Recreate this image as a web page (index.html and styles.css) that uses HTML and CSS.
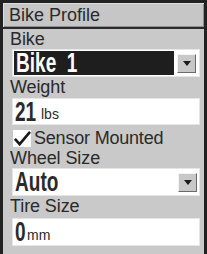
FILE: index.html
```html
<!DOCTYPE html>
<html>
<head>
<meta charset="utf-8">
<link rel="stylesheet" href="styles.css">
</head>
<body>
<div class="screen">
  <div class="title">Bike Profile</div>
  <div class="content">
    <div class="label">Bike</div>
    <div class="select select-dark">
      <span class="val-wrap"><span class="val">Bike&nbsp;&nbsp;1</span></span>
      <span class="btn"><svg width="8" height="5" viewBox="0 0 8 5"><path d="M0 0H8L4 5Z" fill="#1a1a1a"/></svg></span>
    </div>
    <div class="label">Weight</div>
    <div class="field"><span class="val-wrap w-21"><span class="val">21</span></span><span class="unit">lbs</span></div>
    <div class="check">
      <span class="box"><svg width="19" height="17" viewBox="0 0 19 17"><path d="M2 9L7 14.5L18 1.5" fill="none" stroke="#1a1a1a" stroke-width="2.8"/></svg></span>
      <span class="check-text">Sensor Mounted</span>
    </div>
    <div class="label">Wheel Size</div>
    <div class="select">
      <span class="val-wrap"><span class="val">Auto</span></span>
      <span class="btn"><svg width="8" height="5" viewBox="0 0 8 5"><path d="M0 0H8L4 5Z" fill="#1a1a1a"/></svg></span>
    </div>
    <div class="label">Tire Size</div>
    <div class="field field-last"><span class="val-wrap w-0"><span class="val">0</span></span><span class="unit">mm</span></div>
  </div>
</div>
</body>
</html>
```
FILE: styles.css
```css
html, body {
  margin: 0;
  padding: 0;
  background: #222;
}
.screen {
  width: 207px;
  height: 254px;
  box-sizing: border-box;
  border: 3px solid #222;
  border-bottom: 0;
  background: #c9c9c9;
  font-family: "Liberation Sans", Arial, sans-serif;
  color: #2a2a2a;
  overflow: hidden;
}
.title {
  height: 24px;
  box-sizing: content-box;
  border-bottom: 2px solid #2a2a2a;
  box-shadow: inset 1px 1px 0 #dedede, inset -1px -1px 0 #8e8e8e;
  background: #c6c6c6;
  font-size: 18px;
  line-height: 24px;
  padding-left: 6px;
}
.content {
  padding: 0 4px 0 7px;
  display: flex;
  flex-direction: column;
}
.label {
  font-size: 18px;
  line-height: 20px;
  height: 20px;
  letter-spacing: -0.1px;
}
.select, .field {
  margin-left: 2px;
  height: 28px;
  box-sizing: border-box;
  display: flex;
  align-items: center;
  background: #fff;
  border: 1px solid #e6e6e6;
}
.select-dark {
  padding: 1px;
}
.select-dark .val-wrap {
  background: #1e1e1e;
  color: #fff;
  align-self: stretch;
  display: flex;
  align-items: center;
}
.val-wrap {
  display: flex;
  align-items: center;
  overflow: visible;
  padding-left: 2px;
}
.select .val-wrap { flex: 1; }
.val {
  display: inline-block;
  font-family: "Liberation Sans", Arial, sans-serif;
  font-weight: bold;
  font-size: 28px;
  line-height: 26px;
  transform: scaleX(0.68);
  transform-origin: left center;
  white-space: nowrap;
}
.w-21 { width: 24px; }
.w-0 { width: 10px; }
.unit {
  font-size: 14px;
  margin-left: 2px;
  margin-top: 5px;
}
.btn {
  width: 17px;
  height: 17px;
  margin: 0 2px 0 3px;
  background: #c8c8c8;
  border: 1px solid;
  border-color: #f4f4f4 #6a6a6a #6a6a6a #f4f4f4;
  display: flex;
  align-items: center;
  justify-content: center;
}
.field { margin-top: 1px; height: 27px; }
.field-last { margin-top: 2px; height: 28px; }
.check {
  display: flex;
  align-items: center;
  height: 23px;
}
.box {
  width: 18px;
  height: 17px;
  background: #fff;
  margin-left: 3px;
  margin-top: 3px;
  display: flex;
  align-items: center;
  justify-content: center;
  overflow: visible;
}
.check-text {
  font-size: 18px;
  margin-left: 3px;
  margin-top: 3px;
  letter-spacing: -0.2px;
}
```
